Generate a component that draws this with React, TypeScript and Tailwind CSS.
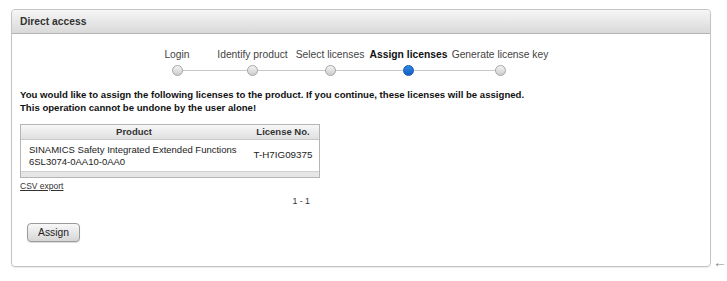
import React from "react";

const steps = [
  { label: "Login", w: "w-[74px]", active: false },
  { label: "Identify product", w: "w-[77px]", active: false },
  { label: "Select licenses", w: "w-[78px]", active: false },
  { label: "Assign licenses", w: "w-[79px]", active: true },
  { label: "Generate license key", w: "w-[104px]", active: false },
];

export default function App() {
  return (
    <div
      className="w-[727px] h-[281px] bg-white text-[#222] overflow-hidden"
      style={{ fontFamily: '"Liberation Sans", Arial, sans-serif' }}
    >
      <div className="flex items-end pt-[9px] pl-[11px]">
        <div className="w-[702px] h-[258px] flex flex-col rounded-[4px] border border-[#c4c4c4] shadow-[0_1px_1px_rgba(0,0,0,0.08)]">
          <div className="h-[24px] flex items-center pl-[8px] rounded-t-[4px] border-b border-[#b4b4b4] bg-gradient-to-b from-[#f6f6f6] to-[#d9d9d9] text-[10.3px] font-bold text-[#333]">
            Direct access
          </div>
          <div className="flex-1 flex flex-col pl-[8px]">
            <div className="relative ml-[120px] mt-[15px] flex w-fit">
              <div className="absolute left-[37px] right-[52px] top-[21px] h-px bg-[#c8c8c8]" />
              {steps.map((s) => (
                <div key={s.label} className={`relative flex flex-col items-center ${s.w}`}>
                  <div
                    className={`leading-[12px] whitespace-nowrap text-[10.3px] ${
                      s.active ? "font-bold text-[#111]" : "text-[#444]"
                    }`}
                  >
                    {s.label}
                  </div>
                  <div
                    className={`mt-[4px] w-[11px] h-[11px] rounded-full border ${
                      s.active
                        ? "bg-gradient-to-b from-[#2f86e6] to-[#135fbf] border-[#1358b0]"
                        : "bg-gradient-to-b from-[#f4f4f4] to-[#cdcdcd] border-[#a5a5a5]"
                    }`}
                  />
                </div>
              ))}
            </div>

            <div className="mt-[12px] text-[9.6px] font-bold leading-[13px] text-[#111]">
              <div>
                You would like to assign the following licenses to the product. If you continue, these licenses will be assigned.
              </div>
              <div>This operation cannot be undone by the user alone!</div>
            </div>

            <div className="mt-[10px] w-[300px] border border-[#b5b5b5] text-[9.5px]">
              <div className="flex h-[15px] items-center bg-gradient-to-b from-[#f7f7f7] to-[#e0e0e0] border-b border-[#c8c8c8] font-bold text-[#333]">
                <div className="w-[226px] text-center">Product</div>
                <div className="flex-1 text-center">License No.</div>
              </div>
              <div className="flex h-[31px] items-center text-[#222]">
                <div className="w-[226px] pl-[8px] leading-[12px]">
                  <div>SINAMICS Safety Integrated Extended Functions</div>
                  <div>6SL3074-0AA10-0AA0</div>
                </div>
                <div className="flex-1 text-center text-[9.8px]">T-H7IG09375</div>
              </div>
              <div className="h-[6px] bg-[#e6e6e6] border-t border-[#d0d0d0]" />
            </div>

            <div className="mt-[3px] text-[8.5px] leading-[11px] underline text-[#333]">CSV export</div>
            <div className="mt-[4px] w-[300px] pr-[10px] text-right text-[8.8px] leading-[11px] text-[#333]">1 - 1</div>

            <div className="mt-[12px] ml-[7px]">
              <button className="w-[53px] h-[19px] rounded-[4px] border border-[#9a9a9a] bg-gradient-to-b from-[#f8f8f8] to-[#d6d6d6] text-[10.3px] text-[#222] shadow-[0_1px_1px_rgba(0,0,0,0.15)]">
                Assign
              </button>
            </div>
          </div>
        </div>
        <div className="ml-[2px] mb-[-2px] text-[14px] leading-[14px] text-[#8a8a8a]">←</div>
      </div>
    </div>
  );
}
